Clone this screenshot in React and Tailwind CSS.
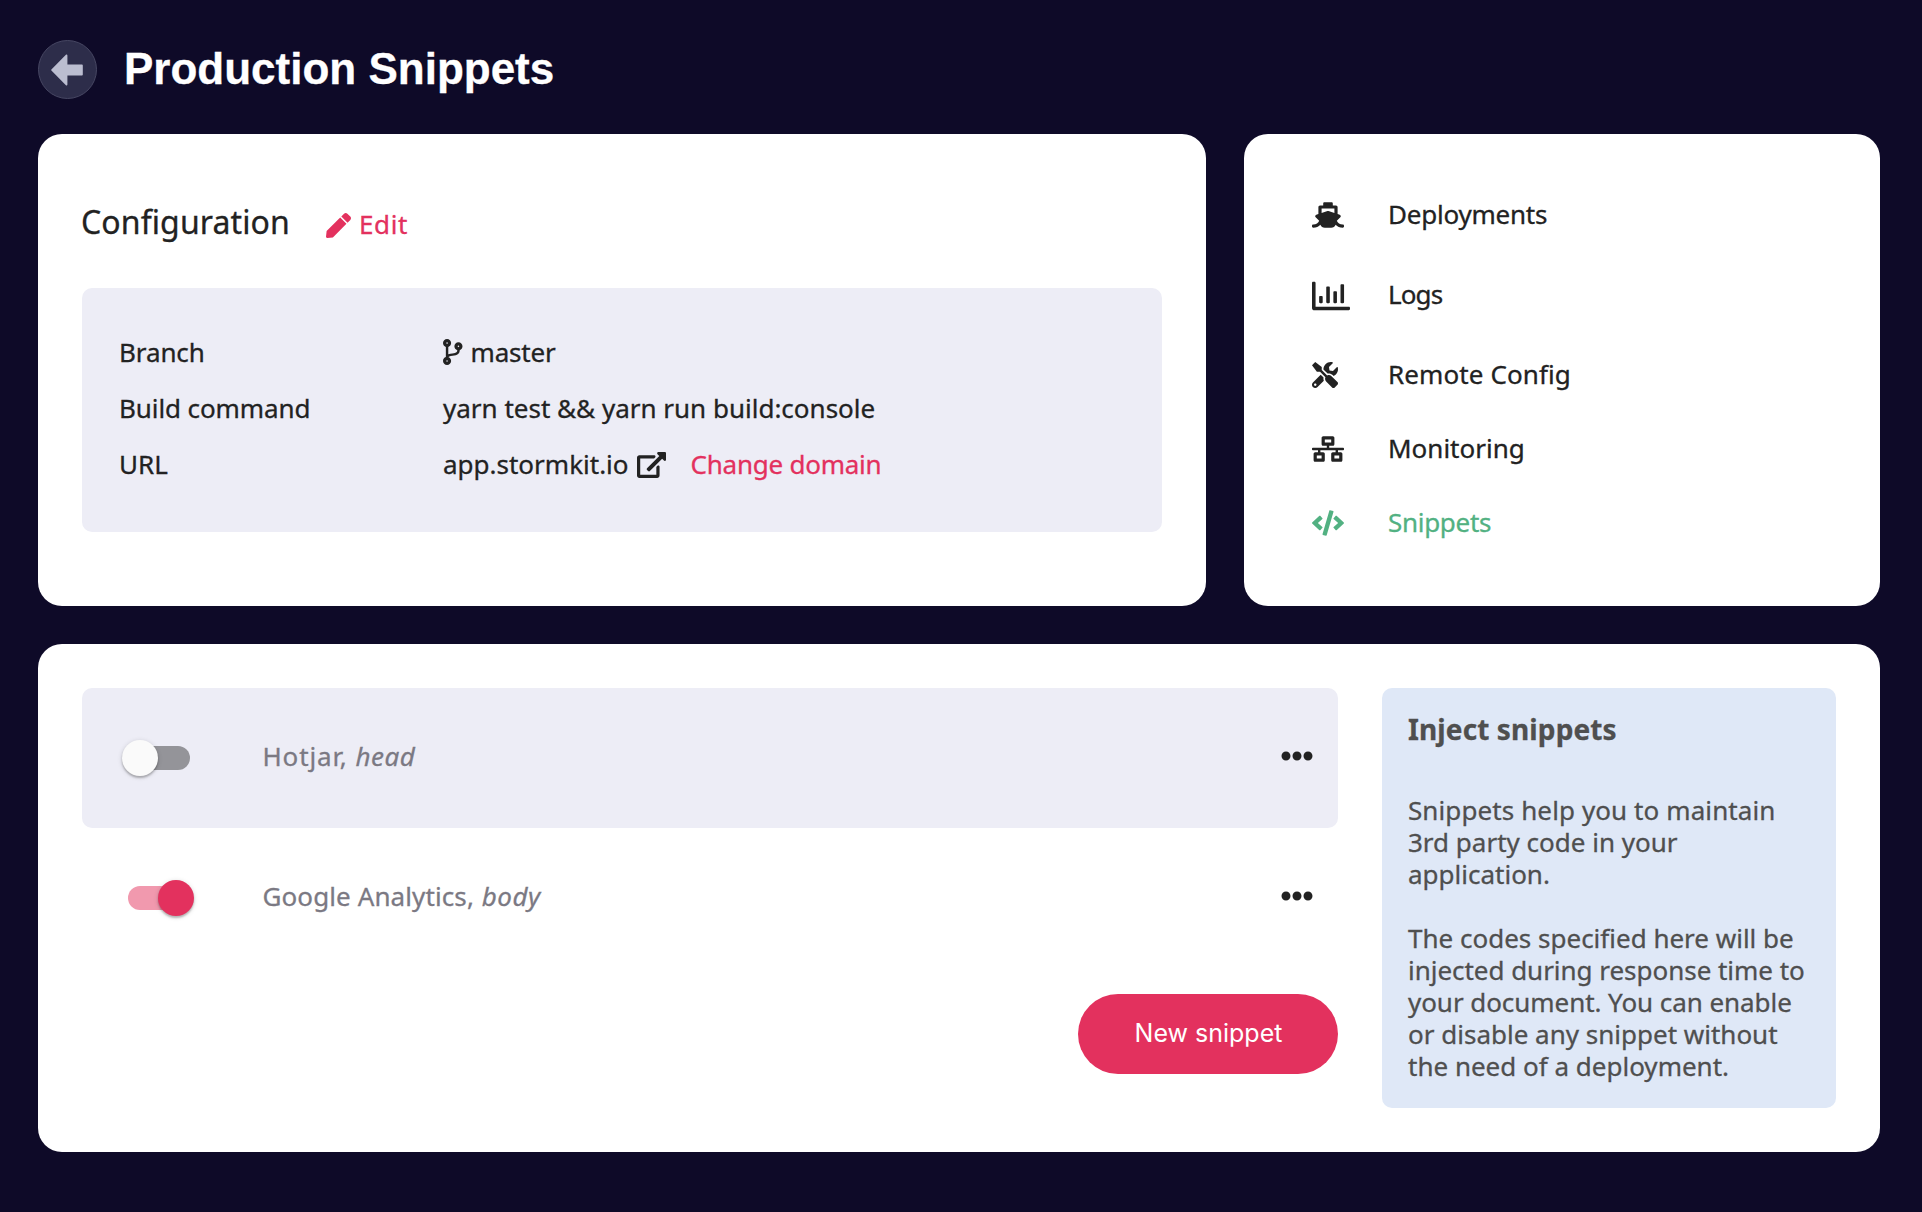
import clsx from "clsx";
import {
  FaPen,
  FaCodeBranch,
  FaShip,
  FaRegChartBar,
  FaTools,
  FaNetworkWired,
  FaCode,
  FaEllipsisH,
} from "react-icons/fa";

function BackButton() {
  return (
    <button className="flex h-[59px] w-[59px] items-center justify-center rounded-full border border-[#474763] bg-[#2d2d4a] pr-0.5 text-[#bbbdd0]">
      <svg viewBox="0 0 32 32" className="h-8 w-8" fill="currentColor">
        <path d="M16.4 1.4v9.2h14.3c.6 0 1.1.4 1.1 1v8.8c0 .6-.5 1-1.1 1H16.4v9.2c0 .9-.9 1.2-1.5.6L.4 16.6a.9.9 0 0 1 0-1.2L14.9.8c.6-.6 1.5-.3 1.5.6z" />
      </svg>
    </button>
  );
}

function ExternalLinkIcon() {
  return (
    <svg viewBox="0 0 576 512" className="h-[26px] w-[29px]" fill="currentColor">
      <path d="M576 24v127.984c0 21.461-25.96 31.98-40.971 16.971l-35.707-35.709-243.523 243.523c-9.373 9.373-24.568 9.373-33.941 0l-22.627-22.627c-9.373-9.373-9.373-24.569 0-33.941L442.756 76.676l-35.703-35.705C391.982 25.9 402.656 0 424.024 0H552c13.255 0 24 10.745 24 24zM407.029 270.794l-16 16A23.999 23.999 0 0 0 384 303.765V448H64V128h264a24.003 24.003 0 0 0 16.97-7.029l16-16C376.089 89.851 365.381 64 344 64H48C21.49 64 0 85.49 0 112v352c0 26.51 21.49 48 48 48h352c26.51 0 48-21.49 48-48V287.764c0-21.382-25.852-32.09-40.971-16.97z" />
    </svg>
  );
}

function Configuration() {
  return (
    <section className="h-[472px] w-[1168px] rounded-3xl bg-white px-11 pt-[66px]">
      <div className="flex h-11 items-start">
        <h2 className="-ml-px w-[245px] text-[32px] leading-[44px] tracking-[0.1px]">Configuration</h2>
        <a className="mt-2 flex items-center text-[#e3315e]">
          <FaPen className="mt-0.5 h-[25px] w-[25px]" />
          <span className="ml-2 tracking-[0.6px]">Edit</span>
        </a>
      </div>
      <dl className="mt-11 grid h-[244px] grid-cols-[324px_1fr] content-start rounded-[10px] bg-[#ededf6] pt-9 pl-[37px] leading-[56px]">
        <dt className="tracking-[-0.1px]">Branch</dt>
        <dd className="flex items-center">
          <FaCodeBranch className="h-[26px] w-[19.5px]" />
          <span className="ml-2 tracking-[-0.18px]">master</span>
        </dd>
        <dt className="tracking-[-0.1px]">Build command</dt>
        <dd>yarn test &amp;&amp; yarn run build:console</dd>
        <dt>URL</dt>
        <dd className="flex items-center">
          <span>app.stormkit.io</span>
          <span className="mt-px ml-2">
            <ExternalLinkIcon />
          </span>
          <a className="ml-[25px] tracking-[-0.24px] text-[#e3315e]">Change domain</a>
        </dd>
      </dl>
    </section>
  );
}

const NAV = [
  { label: "Deployments", icon: FaShip, size: "mt-px h-[26px] w-8", row: "h-[74px]", text: "tracking-[-0.22px]" },
  { label: "Logs", icon: FaRegChartBar, size: "mt-1 h-[38px] w-[38px]", row: "h-[86px]", text: "tracking-[-0.9px]" },
  { label: "Remote Config", icon: FaTools, size: "mt-px h-[26px] w-[26px]", row: "h-[74px]", text: "tracking-[0.1px]" },
  { label: "Monitoring", icon: FaNetworkWired, size: "mt-px h-[26px] w-8", row: "h-[74px]", text: "" },
  { label: "Snippets", icon: FaCode, size: "mt-px h-[26px] w-8", row: "h-[74px]", text: "tracking-[-0.3px]", active: true },
];

function Navigation() {
  return (
    <nav className="h-[472px] w-[636px] rounded-3xl bg-white pt-[43px] pl-[68px]">
      {NAV.map(({ label, icon: Icon, size, row, text, active }) => (
        <a key={label} className={clsx("flex items-center", row, active && "text-[#52b182]")}>
          <span className="flex w-[76px]">
            <Icon className={size} />
          </span>
          <span className={text}>{label}</span>
        </a>
      ))}
    </nav>
  );
}

function Toggle({ on }) {
  return (
    <span className={clsx("relative mt-1 h-6 w-[62px] rounded-full", on ? "bg-[#f199ae]" : "bg-[#949499]")}>
      <span
        className={clsx(
          "absolute -top-1.5 h-9 w-9 rounded-full shadow-[0_2px_2px_rgba(0,0,0,0.22),0_1px_5px_rgba(0,0,0,0.16)]",
          on ? "left-[30px] bg-[#e3315e]" : "-left-1.5 bg-[#fafafa]"
        )}
      />
    </span>
  );
}

function SnippetRow({ name, location, on, shaded, tracking }) {
  return (
    <div className={clsx("flex h-[140px] items-center rounded-[10px] pr-[25px] pb-1 pl-[46px]", shaded && "bg-[#ededf6]")}>
      <Toggle on={on} />
      <span className="ml-[72.5px] text-[#7b7983]">
        <span className={tracking}>{name},</span> <em className="ml-px tracking-[0.5px]">{location}</em>
      </span>
      <FaEllipsisH className="ml-auto h-8 w-8" />
    </div>
  );
}

function InfoBox() {
  return (
    <aside className="h-[420px] w-[454px] rounded-[10px] bg-[#dfe8f7] pt-[25px] pl-[26px] whitespace-nowrap text-[#4f4f4f]">
      <h3 className="text-[28px] leading-8 font-bold tracking-[0.12px]">Inject snippets</h3>
      <p className="mt-[49px]">
        <span className="tracking-[0.1px]">Snippets help you to maintain</span>
        <br />
        3rd party code in your
        <br />
        application.
      </p>
      <p className="mt-8">
        The codes specified here will be
        <br />
        <span className="tracking-[-0.03px]">injected during response time to</span>
        <br />
        <span className="tracking-[-0.06px]">your document. You can enable</span>
        <br />
        or disable any snippet without
        <br />
        the need of a deployment.
      </p>
    </aside>
  );
}

export default function App() {
  return (
    <div className="min-h-[1212px] w-[1922px] bg-[#0e0a28] pt-10 pl-[38px] font-['Noto_Sans',sans-serif] text-[26px] leading-8 text-[#222222] [-webkit-text-stroke:0.3px]">
      <header className="flex items-center">
        <BackButton />
        <h1 className="-mt-px ml-[27px] font-['Liberation_Sans',sans-serif] text-[44px] leading-[58px] font-bold text-white">
          Production Snippets
        </h1>
      </header>
      <div className="mt-[35px] flex gap-[38px]">
        <Configuration />
        <Navigation />
      </div>
      <main className="mt-[38px] flex h-[508px] w-[1842px] gap-11 rounded-3xl bg-white p-11">
        <div className="w-[1256px]">
          <SnippetRow name="Hotjar" location="head" shaded tracking="tracking-[0.85px]" />
          <SnippetRow name="Google Analytics" location="body" on tracking="tracking-[0.1px]" />
          <button className="mt-[26px] ml-auto flex h-20 w-[260px] items-center justify-center rounded-full bg-[#e3315e] pb-0.5 pl-px font-['Inter',sans-serif] text-[25px] text-white [-webkit-text-stroke:0px]">
            New snippet
          </button>
        </div>
        <InfoBox />
      </main>
    </div>
  );
}
